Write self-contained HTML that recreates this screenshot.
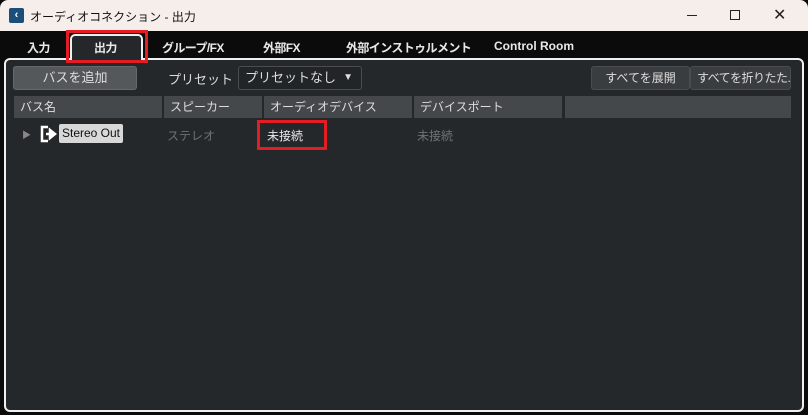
<!DOCTYPE html>
<html><head><meta charset="utf-8"><style>
*{margin:0;padding:0;box-sizing:border-box}
body{width:808px;height:415px;background:#0b0b0b;font-family:"Liberation Sans","Noto Sans CJK JP",sans-serif;position:relative;overflow:hidden;color:#ddd}
.a{position:absolute;white-space:nowrap}
.title{left:0;top:0;width:808px;height:31px;background:#f6eeeb;border-radius:8px 8px 0 0}
.tab{top:39px;font-size:12px;font-weight:bold;color:#e8e8e8;letter-spacing:-0.6px}
.panel{left:4px;top:58px;width:800px;height:354px;background:#25282b;border:2px solid #f0f0f0;border-radius:6px}
.btn{background:#3a3d40;border:1px solid #4a4d50;border-radius:3px;font-size:13px;color:#ddd;text-align:center;line-height:22px;overflow:hidden}
.hd{top:96px;height:22px;background:#45484b;font-size:12px;color:#ddd;line-height:22px;padding-left:6px}
.red{border:3px solid #e41c24}
</style></head><body>
<div class="a title"></div>
<div class="a" style="left:9px;top:8px;width:15px;height:15px;background:#1b4f7a;border-radius:2px;color:#fff;font-size:11px;line-height:15px;text-align:center;font-weight:bold">‹</div>
<div class="a" style="left:30px;top:8px;font-size:12px;color:#111">オーディオコネクション - 出力</div>
<div class="a" style="left:687px;top:15px;width:10px;height:1px;background:#222"></div>
<div class="a" style="left:730px;top:10px;width:10px;height:10px;border:1px solid #222"></div>
<div class="a" style="left:773px;top:5px;font-size:16px;color:#222">✕</div>
<div class="a panel"></div>
<div class="a" style="left:70px;top:34px;width:73px;height:26px;border:2px solid #f0f0f0;border-bottom:none;border-radius:5px 5px 0 0;background:#25282b"></div>
<div class="a tab" style="left:27px">入力</div>
<div class="a tab" style="left:94px">出力</div>
<div class="a tab" style="left:162px">グループ/FX</div>
<div class="a tab" style="left:263px">外部FX</div>
<div class="a tab" style="left:346px">外部インストゥルメント</div>
<div class="a tab" style="left:494px;letter-spacing:0">Control Room</div>
<div class="a red" style="left:66px;top:30px;width:82px;height:33px"></div>
<div class="a btn" style="left:13px;top:66px;width:124px;height:24px;background:#55585b;border-color:#66696c">バスを追加</div>
<div class="a" style="left:168px;top:69px;font-size:13px">プリセット</div>
<div class="a btn" style="left:238px;top:66px;width:124px;height:24px;background:#222528;text-align:left;padding-left:6px">プリセットなし<span style="position:absolute;right:8px;font-size:10px">▼</span></div>
<div class="a btn" style="left:591px;top:66px;width:99px;height:24px;font-size:12px">すべてを展開</div>
<div class="a btn" style="left:690px;top:66px;width:101px;height:24px;font-size:12px;text-align:left;padding-left:6px;letter-spacing:-0.5px">すべてを折りたた.</div>
<div class="a hd" style="left:14px;width:148px">バス名</div>
<div class="a hd" style="left:164px;width:98px">スピーカー</div>
<div class="a hd" style="left:264px;width:148px">オーディオデバイス</div>
<div class="a hd" style="left:414px;width:148px">デバイスポート</div>
<div class="a hd" style="left:565px;width:226px"></div>
<div class="a" style="left:22px;top:128px;font-size:9px;color:#888">▶</div>
<svg class="a" style="left:40px;top:125px" width="18" height="18" viewBox="0 0 18 18"><path d="M8 2H2v14h6" fill="none" stroke="#fff" stroke-width="2.5"/><path d="M6 9h6M10 5l5 4-5 4z" stroke="#fff" stroke-width="2.5" fill="#fff"/></svg>
<div class="a" style="left:59px;top:124px;width:64px;height:19px;background:#d8d8d8;border-radius:2px;color:#111;font-size:12px;line-height:19px;text-align:center">Stereo Out</div>
<div class="a" style="left:167px;top:127px;font-size:12px;color:#6f7275">ステレオ</div>
<div class="a" style="left:267px;top:127px;font-size:12px;color:#e8e8e8">未接続</div>
<div class="a" style="left:417px;top:127px;font-size:12px;color:#6f7275">未接続</div>
<div class="a red" style="left:257px;top:120px;width:70px;height:30px"></div>
</body></html>
